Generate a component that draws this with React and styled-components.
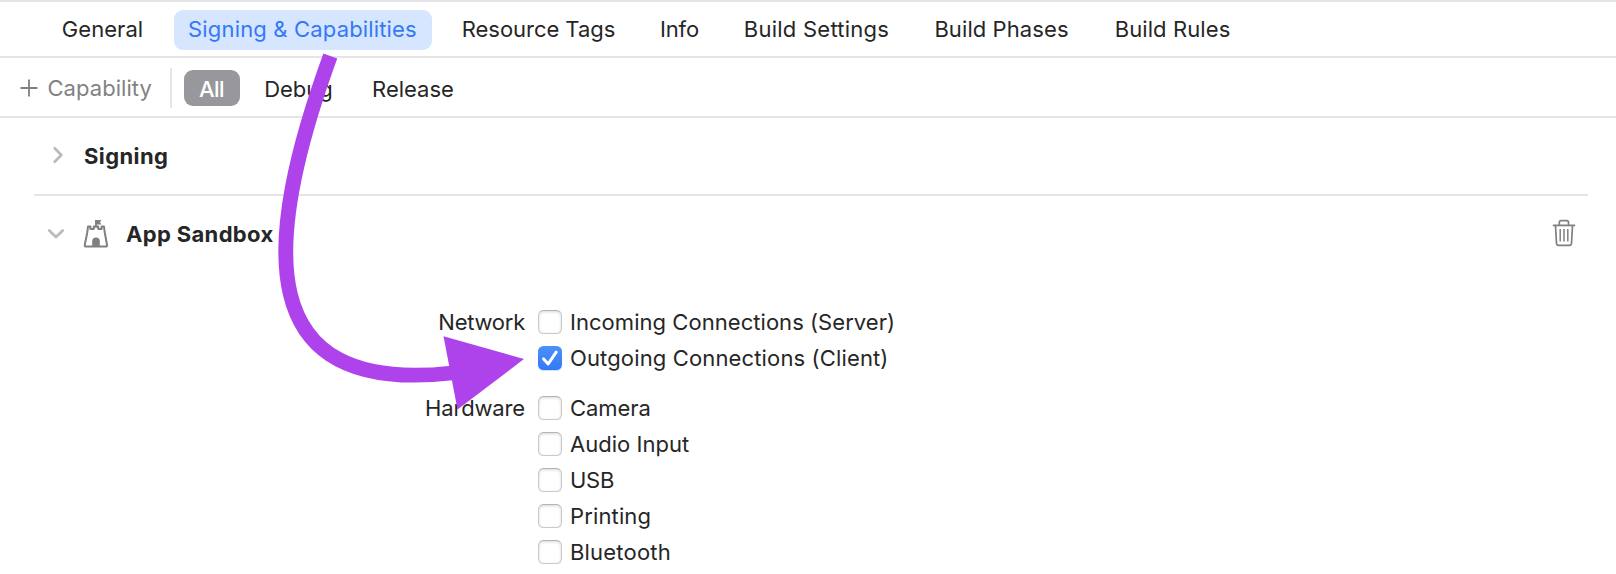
import React from "react";
import styled, { createGlobalStyle } from "styled-components";

const GlobalStyle = createGlobalStyle`
  *, *::before, *::after { box-sizing: border-box; }
  body {
    margin: 0;
    background: #fff;
    color: #262626;
    font: 400 22px/26px Inter, "Liberation Sans", sans-serif;
    overflow: hidden;
  }
`;

const Editor = styled.main`
  position: relative;
  height: 574px;
  overflow: hidden;
  border-top: 2px solid #e5e5e5;
`;

const Label = styled.span`
  letter-spacing: ${(p) => p.$tracking || 0}px;
  white-space: nowrap;
`;

const TabBar = styled.nav`
  display: flex;
  gap: 16px;
  height: 56px;
  padding: 8px 0 0 48px;
  border-bottom: 2px solid #e5e5e5;
`;

const Tab = styled.div`
  display: flex;
  justify-content: center;
  flex: none;
  width: ${(p) => p.$width}px;
  height: 40px;
  padding: 6px 1px 0 0;
  border-radius: 9px;
  background: ${(p) => (p.$active ? "#d6e6fe" : "transparent")};
  color: ${(p) => (p.$active ? "#3478f6" : "inherit")};
`;

const FilterBar = styled.div`
  display: flex;
  align-items: center;
  height: 60px;
  padding: 2px 0 0 20px;
  border-bottom: 2px solid #e5e5e5;
`;

const AddCapability = styled.div`
  display: flex;
  align-items: center;
  gap: 9.5px;
  width: 150px;
  padding-bottom: 1px;
  color: #828282;
`;

const Divider = styled.div`
  width: 2px;
  height: 40px;
  margin-right: 12px;
  background: #e5e5e5;
`;

const Filter = styled.div`
  display: flex;
  justify-content: center;
  width: ${(p) => p.$width}px;
  height: 36px;
  padding: 6px 1px 0 0;
  border-radius: 9px;
  background: ${(p) => (p.$active ? "#98989c" : "transparent")};
  color: ${(p) => (p.$active ? "#fff" : "inherit")};
  font-weight: ${(p) => (p.$active ? 500 : 400)};
`;

const SectionHeader = styled.header`
  display: flex;
  align-items: center;
  height: ${(p) => (p.$divided ? 78 : 76)}px;
  margin: 0 28px 0 34px;
  padding: 0 12.5px 0 13px;
  border-bottom: ${(p) => (p.$divided ? "2px solid #e5e5e5" : "none")};
  font-weight: 700;
`;

const Disclosure = styled.svg`
  flex: none;
  width: 18px;
  height: 18px;
  margin: 0 19px 3px 0;
  fill: none;
  stroke: #bcbcbc;
  stroke-width: 2.8;
  stroke-linecap: round;
  stroke-linejoin: round;
`;

const Glyph = styled.svg`
  flex: none;
  display: block;
  fill: none;
  stroke: #808080;
  stroke-linejoin: round;
`;

const CastleGlyph = styled(Glyph)`
  margin-right: 17px;
  margin-left: -1px;
`;

const TrashGlyph = styled(Glyph)`
  margin: 0 0 2px auto;
`;

const Settings = styled.div`
  display: flex;
  flex-direction: column;
  gap: 14px;
  padding-top: 32px;
`;

const Group = styled.div`
  display: grid;
  grid-template-columns: 525px 1fr;
  column-gap: 13px;
`;

const GroupName = styled.div`
  line-height: 36px;
  text-align: right;
`;

const Option = styled.div`
  display: flex;
  align-items: center;
  gap: 8px;
  height: 36px;
`;

const Checkbox = styled.div`
  display: grid;
  place-items: center;
  width: 24px;
  height: 24px;
  border-radius: 5.5px;
  border: ${(p) => (p.$checked ? "none" : "1px solid #cacaca")};
  border-top-color: #b3b3b3;
  background: ${(p) =>
    p.$checked ? "linear-gradient(#4b91f8, #3478f6)" : "#fff"};
  box-shadow: ${(p) =>
    p.$checked
      ? "0 1px 1px rgba(52, 120, 246, 0.25)"
      : "inset 0 1px 3px rgba(0, 0, 0, 0.16)"};
`;

const Arrow = styled.svg`
  position: absolute;
  left: 0;
  top: -2px;
  pointer-events: none;
`;

const tabs = [
  { name: "General", width: 110, tracking: 0.05 },
  { name: "Signing & Capabilities", width: 258, tracking: 0.164, active: true },
  { name: "Resource Tags", width: 182, tracking: -0.034 },
  { name: "Info", width: 68, tracking: -0.2 },
  { name: "Build Settings", width: 174, tracking: 0.243 },
  { name: "Build Phases", width: 164, tracking: 0.085 },
  { name: "Build Rules", width: 146, tracking: 0.096 },
];

const filters = [
  { name: "All", width: 56, tracking: -0.6, active: true },
  { name: "Debug", width: 118, tracking: -0.04 },
  { name: "Release", width: 111, tracking: 0 },
];

const groups = [
  {
    name: "Network",
    tracking: -0.25,
    options: [
      { name: "Incoming Connections (Server)", tracking: 0.045 },
      { name: "Outgoing Connections (Client)", tracking: 0.14, checked: true },
    ],
  },
  {
    name: "Hardware",
    tracking: -0.15,
    options: [
      { name: "Camera", tracking: -0.04 },
      { name: "Audio Input", tracking: 0.02 },
      { name: "USB", tracking: -0.3 },
      { name: "Printing", tracking: 0.139 },
      { name: "Bluetooth", tracking: 0.2 },
    ],
  },
];

function Plus() {
  return (
    <Glyph width="18" height="18" viewBox="0 0 18 18" strokeWidth="1.8">
      <path d="M9 .5v17M.5 9h17" />
    </Glyph>
  );
}

function Castle() {
  return (
    <CastleGlyph width="26" height="30" viewBox="0 0 26 30" strokeWidth="2">
      <path d="M5 7.6h2.4v2.3h3.4V7.6h4.4v2.3h3.4V7.6H21l.7 5.6 2.3 12.6q.3 1.7-1.2 1.7H3q-1.5 0-1.2-1.7l2.5-12.6z" />
      <path d="M9.2 27.5v-5.2q0-3.9 3.8-3.9t3.8 3.9v5.2z" fill="#808080" stroke="none" />
      <path d="M13 8.5V1" strokeWidth="1.8" />
      <path d="M12.1 1h6.3l-1.4 2.2 1.4 2.3h-6.3z" fill="#808080" stroke="none" />
    </CastleGlyph>
  );
}

function Trash() {
  return (
    <TrashGlyph width="24" height="28" viewBox="0 0 24 28" strokeWidth="1.7">
      <path d="M.8 6.4h22.4" strokeWidth="1.8" />
      <path d="M7.3 6V3.5Q7.3 1.7 9.2 1.7h5.4q1.9 0 1.9 1.8V6" />
      <path d="M3.5 6.6l1 17.6q.1 2.2 2.3 2.2h10.4q2.2 0 2.3-2.2l1-17.6" />
      <path d="M8.2 10v12.6M12 10v12.6M15.8 10v12.6" strokeWidth="1.5" />
    </TrashGlyph>
  );
}

function Checkmark() {
  return (
    <svg width="24" height="24" viewBox="0 0 24 24" fill="none">
      <path
        d="M5.6 12.9l4.6 5L18.2 6.2"
        stroke="#fff"
        strokeWidth="3"
        strokeLinecap="round"
        strokeLinejoin="round"
      />
    </svg>
  );
}

export default function App() {
  return (
    <>
      <GlobalStyle />
      <Editor>
        <TabBar>
          {tabs.map((t) => (
            <Tab key={t.name} $width={t.width} $active={t.active}>
              <Label $tracking={t.tracking}>{t.name}</Label>
            </Tab>
          ))}
        </TabBar>
        <FilterBar>
          <AddCapability>
            <Plus />
            <Label $tracking={0.05}>Capability</Label>
          </AddCapability>
          <Divider />
          {filters.map((f) => (
            <Filter key={f.name} $width={f.width} $active={f.active}>
              <Label $tracking={f.tracking}>{f.name}</Label>
            </Filter>
          ))}
        </FilterBar>
        <SectionHeader $divided>
          <Disclosure viewBox="0 0 18 18">
            <path d="M7.7 2.3l6.6 6.7-6.6 6.7" />
          </Disclosure>
          <Label $tracking={0.4}>Signing</Label>
        </SectionHeader>
        <SectionHeader>
          <Disclosure viewBox="0 0 18 18">
            <path d="M2.3 6.5l6.7 6.6 6.7-6.6" />
          </Disclosure>
          <Castle />
          <Label $tracking={0.34}>App Sandbox</Label>
          <Trash />
        </SectionHeader>
        <Settings>
          {groups.map((g) => (
            <Group key={g.name}>
              <GroupName>
                <Label $tracking={g.tracking}>{g.name}</Label>
              </GroupName>
              <div>
                {g.options.map((o) => (
                  <Option key={o.name}>
                    <Checkbox $checked={o.checked}>
                      {o.checked && <Checkmark />}
                    </Checkbox>
                    <Label $tracking={o.tracking}>{o.name}</Label>
                  </Option>
                ))}
              </div>
            </Group>
          ))}
        </Settings>
        <Arrow width="560" height="430" viewBox="0 0 560 430">
          <path
            d="M330.3 56C262 244 251 395.5 452 373"
            fill="none"
            stroke="#af43eb"
            strokeWidth="14.8"
          />
          <path d="M443.5 336.3L524 359 457.5 409.6z" fill="#af43eb" />
        </Arrow>
      </Editor>
    </>
  );
}
